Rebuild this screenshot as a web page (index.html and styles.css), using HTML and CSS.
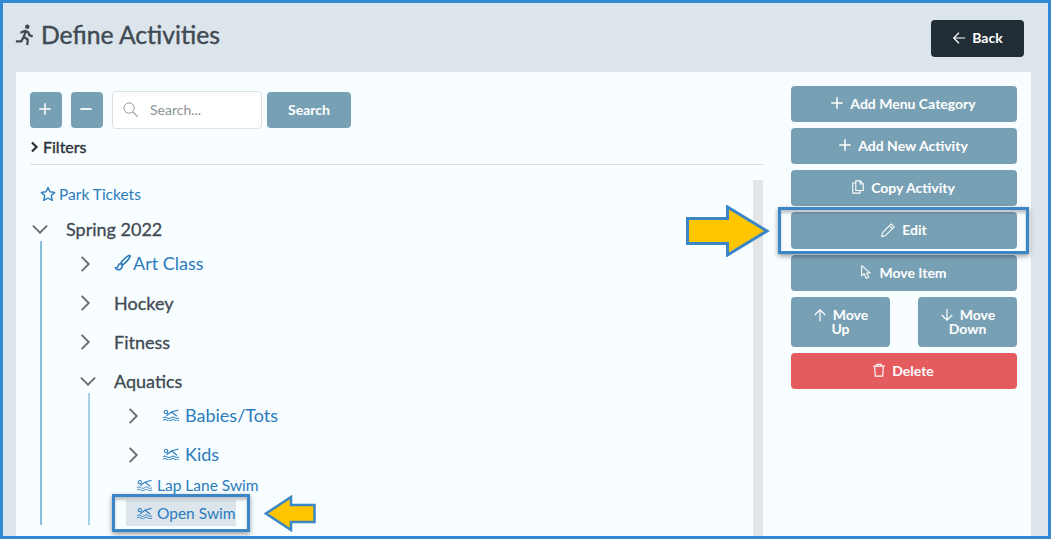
FILE: index.html
```html
<!DOCTYPE html>
<html lang="en">
<head>
    <meta charset="UTF-8">
    <meta name="viewport" content="width=device-width, initial-scale=1.0">
    <title>Define Activities</title>
    <link rel="stylesheet" href="styles.css">
</head>
<body>
    <svg class="icon-defs" width="0" height="0" aria-hidden="true">
        <symbol id="swim" viewBox="0 0 18 12">
            <path d="M1 8.800c1.300-1 2.700-1 4 0s2.700 1 4 0 2.700-1 4 0 2.700 1 4 0M1 11.300c1.300-1 2.700-1 4 0s2.700 1 4 0 2.700-1 4 0 2.700 1 4 0" fill="none" stroke="currentColor" stroke-width="1"/>
            <path d="M16.500 1L9.500 3l5.500 4.300M9.500 3L4.500 6.800" fill="none" stroke="currentColor" stroke-width="1.200"/>
            <circle cx="4" cy="3" r="1.700" fill="none" stroke="currentColor" stroke-width="1.100"/>
        </symbol>
        <symbol id="chev-right" viewBox="0 0 24 24">
            <path d="M7.500 2.500L17 12l-9.500 9.500" fill="none" stroke="currentColor" stroke-width="2.500"/>
        </symbol>
        <symbol id="chev-small" viewBox="0 0 10 12">
            <path d="M2 1.500L6.500 6 2 10.500" fill="none" stroke="currentColor" stroke-width="2.200"/>
        </symbol>
        <symbol id="chev-down" viewBox="0 0 24 24">
            <path d="M3.500 8l8.500 8.500L20.500 8" fill="none" stroke="currentColor" stroke-width="2.200"/>
        </symbol>
        <symbol id="plus" viewBox="0 0 16 16">
            <path d="M8 1.500v13M1.500 8h13" fill="none" stroke="currentColor" stroke-width="1.700"/>
        </symbol>
    </svg>

    <div class="frame">
        <header class="page-header">
            <h1 class="page-title">
                <svg class="title-icon" viewBox="0 0 22 24">
                    <circle cx="13.500" cy="3" r="2.500" fill="currentColor"/>
                    <path d="M6 9.500l5-2 3.500 1.500 1.500 3.500 3.500 1M12 8l-2.500 6 4.500 3-.5 6M9 15l-2 4H1" fill="none" stroke="currentColor" stroke-width="2.500" stroke-linejoin="round"/>
                </svg>
                Define Activities
            </h1>
            <button class="btn btn-dark">
                <svg class="btn-icon" viewBox="0 0 16 16"><path d="M15 8H2M8 2L2 8l6 6" fill="none" stroke="currentColor" stroke-width="1.400"/></svg>
                Back
            </button>
        </header>

        <main class="card">
            <section class="tree-panel">
                <div class="toolbar">
                    <button class="btn btn-square"><svg class="btn-icon"><use href="#plus"/></svg></button>
                    <button class="btn btn-square"><svg class="btn-icon" viewBox="0 0 16 16"><path d="M1.500 8h13" stroke="currentColor" stroke-width="2"/></svg></button>
                    <label class="search-box">
                        <svg class="search-icon" viewBox="0 0 16 16"><circle cx="6.500" cy="6.500" r="5.500" fill="none" stroke="currentColor"/><path d="M10.500 10.500l5 5" stroke="currentColor" stroke-width="1.200"/></svg>
                        <input class="search-input" placeholder="Search...">
                    </label>
                    <button class="btn btn-search">Search</button>
                </div>
                <div class="filters">
                    <svg class="filters-chev"><use href="#chev-small"/></svg>
                    Filters
                </div>

                <div class="tree-wrap">
                    <div class="tree">
                        <div class="park-row link">
                            <svg class="star" viewBox="0 0 16 16"><path d="M8 1.500l2 4.300 4.700.6-3.400 3.200.9 4.700L8 12l-4.200 2.300.9-4.700L1.300 6.400 6 5.800z" fill="none" stroke="currentColor" stroke-width="1.400" stroke-linejoin="round"/></svg>
                            Park Tickets
                        </div>

                        <div class="row row-top">
                            <span class="chev"><svg class="chev-down"><use href="#chev-down"/></svg></span>
                            <span class="cat">Spring 2022</span>
                        </div>
                        <div class="children children-top">
                            <div class="row">
                                <span class="chev"><svg class="chev-right"><use href="#chev-right"/></svg></span>
                                <span class="link item">
                                    <svg class="brush" viewBox="0 0 16 16"><path d="M14.500 1.200c-2.500 1-6 4.500-8 7.300l1.800 1.700c2.700-2.100 6-5.700 7-8.200zM6.300 9c-2.500.3-2.300 2.700-3.200 3.500-.5.500-1.300.6-1.800.5.600 1.500 3 2.200 4.700 1.300 1.600-.9 2-2.300 1.700-3.600z" fill="none" stroke="currentColor" stroke-width="1.500" stroke-linejoin="round"/></svg>
                                    Art Class
                                </span>
                            </div>
                            <div class="row">
                                <span class="chev"><svg class="chev-right"><use href="#chev-right"/></svg></span>
                                <span class="cat">Hockey</span>
                            </div>
                            <div class="row">
                                <span class="chev"><svg class="chev-right"><use href="#chev-right"/></svg></span>
                                <span class="cat">Fitness</span>
                            </div>
                            <div class="row">
                                <span class="chev"><svg class="chev-down"><use href="#chev-down"/></svg></span>
                                <span class="cat">Aquatics</span>
                            </div>
                            <div class="children children-sub">
                                <div class="row">
                                    <span class="chev"><svg class="chev-right"><use href="#chev-right"/></svg></span>
                                    <span class="link item item-big"><svg class="swim"><use href="#swim"/></svg>Babies/Tots</span>
                                </div>
                                <div class="row">
                                    <span class="chev"><svg class="chev-right"><use href="#chev-right"/></svg></span>
                                    <span class="link item item-big"><svg class="swim"><use href="#swim"/></svg>Kids</span>
                                </div>
                                <div class="leaf leaf-first link"><svg class="swim swim-small"><use href="#swim"/></svg>Lap Lane Swim</div>
                                <div class="leaf leaf-active link"><svg class="swim swim-small"><use href="#swim"/></svg>Open Swim</div>
                            </div>
                        </div>
                    </div>
                    <div class="scroll-track"></div>
                </div>
            </section>

            <aside class="actions">
                <button class="btn btn-action"><svg class="btn-icon"><use href="#plus"/></svg>Add Menu Category</button>
                <button class="btn btn-action"><svg class="btn-icon"><use href="#plus"/></svg>Add New Activity</button>
                <button class="btn btn-action">
                    <svg class="btn-icon" viewBox="0 0 16 16"><path d="M5.500 1h5l3.500 3.500V12H5.500zM10.500 1v3.500H14M5.500 3.500H2V15h8.500v-3" fill="none" stroke="currentColor" stroke-width="1.200"/></svg>
                    Copy Activity
                </button>
                <button class="btn btn-action">
                    <svg class="btn-icon" viewBox="0 0 16 16"><path d="M11.500 1l3.500 3.500L5 14.500l-4.300 1 1-4.300zM9.500 3l3.500 3.500" fill="none" stroke="currentColor" stroke-width="1.200" stroke-linejoin="round"/></svg>
                    Edit
                </button>
                <button class="btn btn-action">
                    <svg class="btn-icon" viewBox="0 0 16 16"><path d="M3 .8v11.700l3-2.500 2.200 5.200 2.800-1.200-2.200-4.800h4.200z" fill="none" stroke="currentColor" stroke-width="1.200" stroke-linejoin="round"/></svg>
                    Move Item
                </button>
                <div class="move-row">
                    <button class="btn btn-move"><svg class="btn-icon" viewBox="0 0 16 16"><path d="M8 15V2M2 8l6-6 6 6" fill="none" stroke="currentColor" stroke-width="1.400"/></svg>Move Up</button>
                    <button class="btn btn-move"><svg class="btn-icon" viewBox="0 0 16 16"><path d="M8 1v13M2 8l6 6 6-6" fill="none" stroke="currentColor" stroke-width="1.400"/></svg>Move Down</button>
                </div>
                <button class="btn btn-action btn-danger">
                    <svg class="btn-icon" viewBox="0 0 16 16"><path d="M1.500 3.500h13M5.500 3.500v-2h5v2M3 3.500l.8 11.500h8.400l.8-11.500" fill="none" stroke="currentColor" stroke-width="1.300"/></svg>
                    Delete
                </button>
            </aside>
        </main>

        <div class="callout callout-edit"></div>
        <div class="callout callout-swim"></div>
        <svg class="arrow arrow-edit" viewBox="0 0 84 52"><path d="M1.500 13.500h40V2L81 26 41.500 50V38.500h-40z" fill="#ffc600" stroke="#3a86c6" stroke-width="3"/></svg>
        <svg class="arrow arrow-swim" viewBox="0 0 52 37"><path d="M50.500 10H27V2L2 18.500 27 35v-8h23.500z" fill="#ffc600" stroke="#3a86c6" stroke-width="2.500"/></svg>
    </div>
</body>
</html>
```

FILE: styles.css
```css
* {
    box-sizing: border-box;
}

body {
    margin: 0;
    font-family: "Lato", "Liberation Sans", sans-serif;
    color: #3f4a52;
}

.icon-defs {
    position: absolute;
}

.frame {
    position: relative;
    width: 1051px;
    height: 539px;
    border: 3px solid #338ad2;
    background: #dce4ec;
    overflow: hidden;
}

/* header */
.page-header {
    display: flex;
    justify-content: space-between;
    align-items: flex-start;
    padding: 17px 24px 15px 12px;
}

.page-title {
    display: flex;
    align-items: center;
    gap: 6px;
    margin: 0;
    height: 29px;
    font-size: 24.700px;
    font-weight: 400;
    -webkit-text-stroke: 0.4px #3f4a52;
    color: #3f4a52;
}

.title-icon {
    width: 20px;
    height: 24px;
}

.btn {
    display: flex;
    justify-content: center;
    align-items: center;
    gap: 6px;
    border: none;
    border-radius: 4px;
    padding: 0 2px 2px 0;
    background: #78a0b4;
    color: #fff;
    font-family: inherit;
    font-size: 14px;
    font-weight: 700;
}

.btn-icon {
    flex: none;
    width: 14px;
    height: 14px;
}

.btn-dark {
    width: 93px;
    height: 37px;
    padding-right: 0;
    background: #212e36;
}

/* card */
.card {
    display: flex;
    gap: 28px;
    margin: 0 17px 0 13px;
    padding: 14px;
    height: 600px;
    background: #f8fdff;
    border-radius: 2px;
}

.tree-panel {
    width: 733px;
    padding-top: 5px;
}

.toolbar {
    display: flex;
    align-items: center;
    height: 38px;
}

.btn-square {
    width: 32px;
    height: 36px;
    margin-right: 9px;
}

.search-box {
    display: flex;
    align-items: center;
    width: 150px;
    height: 38px;
    padding: 0 0 2px 10px;
    margin-right: 5px;
    background: #fff;
    border: 1px solid #dde1e4;
    border-radius: 4px;
}

.search-icon {
    flex: none;
    width: 15px;
    height: 15px;
    color: #8b9399;
}

.search-input {
    width: 110px;
    margin-left: 12px;
    padding: 0;
    border: none;
    outline: none;
    background: none;
    font-family: inherit;
    font-size: 14px;
}

.search-input::placeholder {
    color: #8b9399;
}

.btn-search {
    width: 84px;
    height: 36px;
    padding-right: 0;
}

.filters {
    display: flex;
    align-items: center;
    gap: 3px;
    height: 36px;
    border-bottom: 1px solid #dadfe2;
    font-size: 16px;
    -webkit-text-stroke: 0.4px #2b3238;
    color: #2b3238;
}

.filters-chev {
    width: 10px;
    height: 12px;
}

/* tree */
.tree-wrap {
    display: flex;
    justify-content: space-between;
}

.tree {
    padding-top: 11px;
}

.scroll-track {
    width: 10px;
    height: 400px;
    margin-top: 15px;
    background: #e4e5e6;
}

.link {
    color: #2a7cbd;
}

.park-row {
    display: flex;
    align-items: center;
    gap: 3px;
    height: 36px;
    margin-left: 10px;
    font-size: 15.500px;
}

.star {
    width: 16px;
    height: 16px;
}

.row {
    display: flex;
    align-items: center;
    gap: 14px;
    height: 39px;
}

.row-top {
    height: 34px;
    margin-left: -2px;
}

.row-top .cat {
    padding-bottom: 1px;
}

.chev {
    display: flex;
    justify-content: center;
    width: 24px;
    color: #666e74;
}

.chev-right {
    width: 20px;
    height: 20px;
    margin-right: 6px;
}

.chev-down {
    width: 20px;
    height: 20px;
}

.cat {
    font-size: 18px;
    -webkit-text-stroke: 0.3px #3f4a52;
}

.item {
    display: flex;
    align-items: center;
    padding-bottom: 2px;
    font-size: 18px;
}

.item-big {
    gap: 5px;
}

.brush {
    width: 17px;
    height: 17px;
    margin-right: 2px;
}

.children {
    margin-left: 12px;
    padding-left: 34px;
    border-left: 2px solid #85bfdc;
}

.children-top {
    margin-top: -5px;
    padding-top: 3px;
    margin-left: 10px;
}

.children-sub {
    margin-top: -7px;
    padding-top: 3px;
    height: 132px;
    border-left-color: #a5d0e6;
}

.swim {
    width: 18px;
    height: 12px;
}

.swim-small {
    width: 17px;
    margin-right: 4px;
}

.leaf {
    display: flex;
    align-items: center;
    width: fit-content;
    height: 28px;
    margin-left: 2px;
    padding-left: 10px;
    font-size: 15.500px;
}

.leaf-first {
    margin-top: -3px;
}

.leaf-active {
    height: 26px;
    margin-top: 1px;
    background: #dce4ec;
}

/* action buttons */
.actions {
    display: flex;
    flex-direction: column;
    gap: 6px;
    width: 226px;
}

.btn-action {
    height: 36px;
    flex: none;
}

.btn-action:nth-child(4) {
    height: 37px;
    padding-right: 0;
    gap: 7px;
}

.move-row {
    display: flex;
    justify-content: space-between;
}

.btn-move {
    display: block;
    width: 99px;
    height: 50px;
    padding: 0 18px;
    line-height: 14px;
    text-align: center;
}

.btn-move .btn-icon {
    margin: 0 6px -2px 0;
}

.btn-danger {
    background: #e55c5f;
}

/* screenshot annotations */
.callout {
    position: absolute;
    border: 3px solid #3a86c6;
    box-shadow: 0 2px 5px rgba(0, 0, 0, 0.4), inset 0 3px 3px rgba(0, 0, 0, 0.22);
}

.callout-edit {
    left: 775px;
    top: 204px;
    width: 251px;
    height: 47px;
}

.callout-swim {
    left: 109px;
    top: 491px;
    width: 138px;
    height: 38px;
}

.arrow {
    position: absolute;
}

.arrow-edit {
    left: 683px;
    top: 202px;
    width: 84px;
    height: 52px;
}

.arrow-swim {
    left: 261px;
    top: 492px;
    width: 52px;
    height: 37px;
}
```
